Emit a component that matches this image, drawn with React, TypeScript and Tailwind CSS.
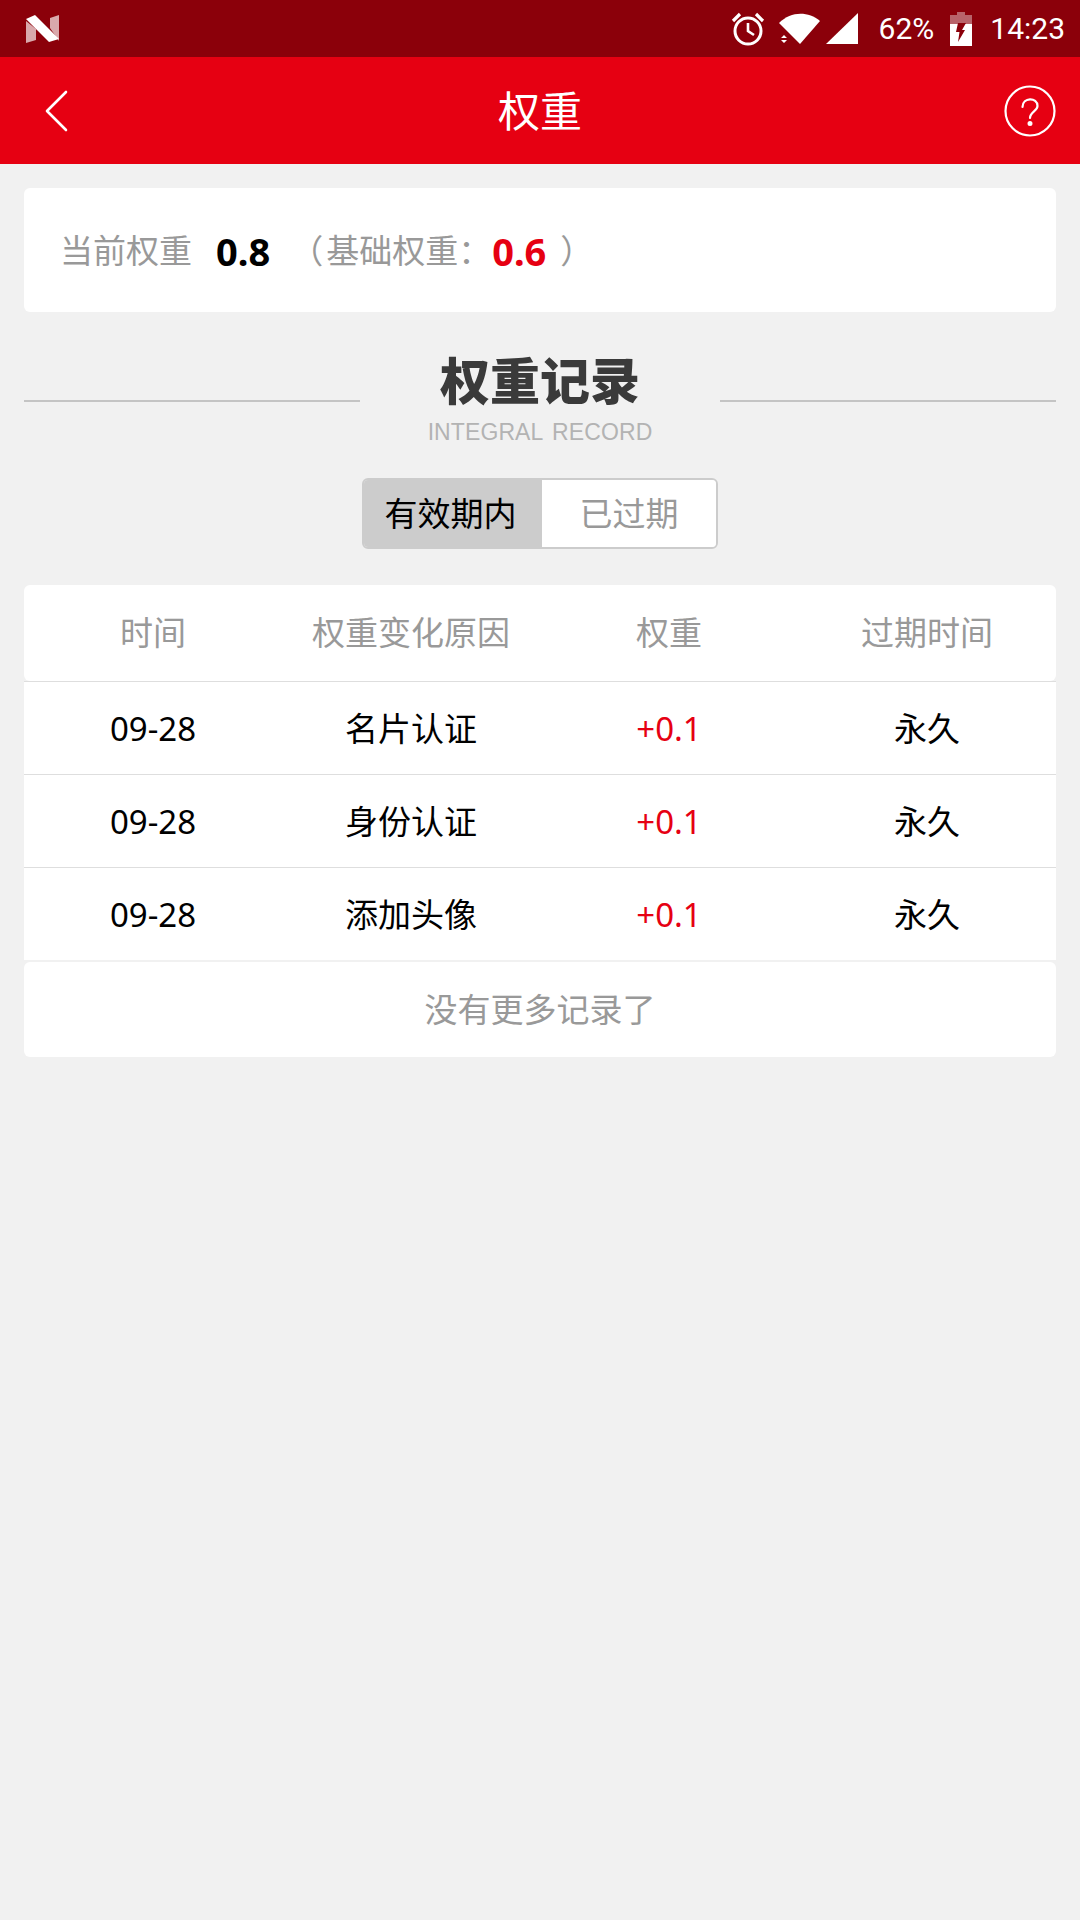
const cjk = "font-['Noto_Sans','Noto_Sans_CJK_SC',sans-serif]";

const rows = [
  ['09-28', '名片认证', '+0.1', '永久'],
  ['09-28', '身份认证', '+0.1', '永久'],
  ['09-28', '添加头像', '+0.1', '永久'],
];

function NLogo() {
  return (
    <svg width="36" height="30" viewBox="0 0 36 30" className="ml-[25px]">
      <path d="M1 7 L11 15 V26 L1 29 Z" fill="#d9a9ac" />
      <path d="M25 4 L34 1 V27 L25 14 Z" fill="#d9a9ac" />
      <path d="M1 5 L10 1 L34 25 L24 28 Z" fill="#fff" />
    </svg>
  );
}

function StatusIcons() {
  return (
    <div className="flex items-center">
      <svg width="34" height="36" viewBox="0 0 34 36" fill="none" stroke="#fff" className="mr-[14px]">
        <circle cx="17" cy="20" r="13" strokeWidth="3" />
        <path d="M17 12 V20 L23 24" strokeWidth="2.6" />
        <path d="M2 10 L9 3 M32 10 L25 3" strokeWidth="3.2" />
      </svg>
      <svg width="42" height="34" viewBox="0 0 42 34" className="mr-[4px]">
        <path d="M0 11 C12 -1 29 -1 41 9 L21 32 Z" fill="#fff" />
        <path d="M2 26 L5 23 L8 26 Z M2 28 L8 28 L5 31 Z" fill="#fff" />
      </svg>
      <svg width="34" height="34" viewBox="0 0 34 34" className="mr-[20px]">
        <path d="M33 1 V32 H1 Z" fill="#fff" />
      </svg>
      <span className="mr-[16px] font-['Roboto',sans-serif] text-[30px] leading-none text-white">62%</span>
      <svg width="22" height="34" viewBox="0 0 22 34" className="mr-[18px]">
        <path d="M7 0 H15 V3 H22 V12 H0 V3 H7 Z" fill="#b8636a" />
        <path d="M0 12 H22 V34 H0 Z" fill="#fff" />
        <path d="M8 11 H16 L12 18 H15 L8 30 L9.5 20 H6 Z" fill="#8b000a" />
      </svg>
      <span className="mr-[15px] font-['Roboto',sans-serif] text-[30px] leading-none text-white">14:23</span>
    </div>
  );
}

export default function App() {
  return (
    <div className={`flex min-h-[1920px] w-[1080px] flex-col bg-[#f1f1f1] ${cjk}`}>
      <div className="flex h-[57px] items-center justify-between bg-[#8b000a]">
        <NLogo />
        <StatusIcons />
      </div>

      <div className="flex h-[107px] items-center bg-[#e60012] px-[24px]">
        <div className="flex flex-1 justify-start">
          <svg width="26" height="42" viewBox="0 0 26 42" fill="none" stroke="#fff" strokeWidth="2.6" strokeLinecap="round" strokeLinejoin="round" className="ml-[20px]">
            <path d="M22 2 L3 21 L22 40" />
          </svg>
        </div>
        <span className="text-[42px] leading-none text-white">权重</span>
        <div className="flex flex-1 justify-end">
          <svg width="52" height="52" viewBox="0 0 52 52" fill="none" stroke="#fff" strokeWidth="2.2">
            <circle cx="26" cy="26" r="24.5" />
            <path d="M18.5 22 C18.5 12 33.5 12 33.5 21 C33.5 26 26 27 26 33" strokeLinecap="round" />
            <circle cx="26" cy="38.5" r="1.4" fill="#fff" />
          </svg>
        </div>
      </div>

      <div className="mx-[24px] mt-[24px] flex h-[124px] items-center rounded-[6px] bg-white pl-[36px] pt-[2px] text-[33px] text-[#999]">
        <span>当前权重</span>
        <span className="ml-[24px] text-[38px] font-bold text-black">0.8</span>
        <span className="ml-[20px]">（</span>
        <span className="ml-[3px]">基础权重：</span>
        <span className="ml-[1px] text-[38px] font-bold text-[#e60012]">0.6</span>
        <span className="ml-[14px]">）</span>
      </div>

      <div className="mx-[24px] mt-[41px] flex items-center justify-between">
        <div className="mt-[4px] h-[2px] w-[336px] bg-[#c4c4c4]" />
        <div className="flex flex-col items-center">
          <span className="text-[50px] font-black leading-[56px] text-[#3a3a3a]">权重记录</span>
          <span className="mt-[10px] font-['Liberation_Sans',sans-serif] text-[23px] leading-[26px] tracking-[0.1px] text-[#b3b3b3] [word-spacing:3px]">INTEGRAL RECORD</span>
        </div>
        <div className="mt-[4px] h-[2px] w-[336px] bg-[#c4c4c4]" />
      </div>

      <div className="mt-[33px] flex justify-center">
        <div className="flex h-[71px] w-[356px] overflow-hidden rounded-[6px] border-2 border-[#cccccc] text-[33px]">
          <div className="flex w-[178px] items-center justify-center bg-[#cccccc] pr-[5px] text-black">有效期内</div>
          <div className="flex flex-1 items-center justify-center bg-white text-[#999]">已过期</div>
        </div>
      </div>

      <div className="mx-[24px] mt-[36px] text-[33px]">
        <div className="grid h-[96px] grid-cols-4 items-center rounded-[6px] bg-white text-center text-[#999]">
          <span>时间</span>
          <span>权重变化原因</span>
          <span>权重</span>
          <span>过期时间</span>
        </div>
        {rows.map((r, i) => (
          <div key={i} className="grid h-[93px] grid-cols-4 items-center border-t border-[#dedede] bg-white pt-[2px] text-center text-black">
            <span>{r[0]}</span>
            <span>{r[1]}</span>
            <span className="text-[#e60012]">{r[2]}</span>
            <span>{r[3]}</span>
          </div>
        ))}
        <div className="mt-[2px] flex h-[95px] items-center justify-center rounded-[6px] bg-white text-[#999]">没有更多记录了</div>
      </div>
    </div>
  );
}
